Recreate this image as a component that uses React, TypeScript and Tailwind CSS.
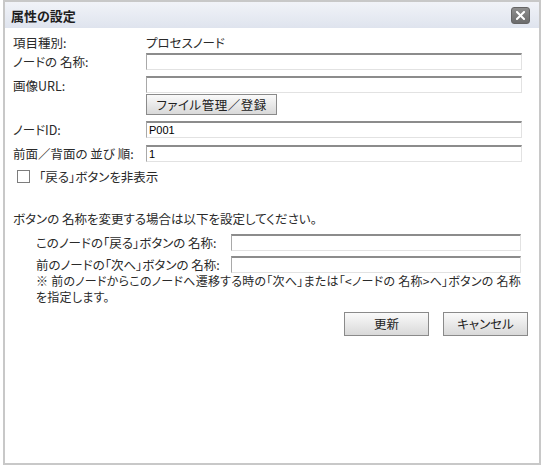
import React from "react";

const inputCls =
  "h-[17px] bg-white border-t-2 border-t-[#8c8c8c] border-l border-l-[#a9a9a9] border-r border-r-[#e2e2e2] border-b border-b-[#e2e2e2] px-[2px] text-[11px] leading-[14px] text-black outline-none [font-family:'Liberation_Sans',sans-serif]";

const btnCls =
  "flex items-center justify-center border border-[#8a8a8a] bg-gradient-to-b from-[#fafafa] to-[#d9d9d9] text-[12.5px] leading-[16px] text-[#222]";

export default function App() {
  return (
    <div className="w-[545px] h-[469px] bg-white pl-[3px] [font-family:'Noto_Sans_CJK_JP',sans-serif] [font-feature-settings:'palt'] text-[12.5px] leading-[16px] text-[#2a2a2a]">
      <div className="w-[538px] h-[465px] border-2 border-[#c8c8c8] flex flex-col">
        <div className="h-[26px] shrink-0 flex items-center justify-between pl-[6px] pr-[9px] bg-gradient-to-b from-[#f1f3f8] to-[#dfe4ee]">
          <span className="text-[13px] font-bold text-[#1e1e1e] leading-none">属性の設定</span>
          <div className="w-[19px] h-[17px] rounded-[3px] bg-gradient-to-b from-[#8f8f8f] to-[#6c6c6c] border border-[#656565] flex items-center justify-center">
            <svg width="9" height="9" viewBox="0 0 9 9">
              <path d="M1 1 L8 8 M8 1 L1 8" stroke="white" strokeWidth="2" strokeLinecap="square" />
            </svg>
          </div>
        </div>

        <div className="flex-1 flex flex-col pl-[8px] pr-[11px]">
          <div className="mt-[7px] h-[16px] flex items-center">
            <span className="w-[133px]">項目種別:</span>
            <span>プロセスノード</span>
          </div>

          <div className="mt-[2px] h-[17px] flex items-center mr-[6px]">
            <span className="w-[133px] shrink-0">ノードの 名称:</span>
            <input className={inputCls + " flex-1"} defaultValue="" />
          </div>

          <div className="mt-[6px] flex items-start mr-[6px]">
            <span className="w-[133px] shrink-0 pt-[2px]">画像URL:</span>
            <div className="flex-1 flex flex-col">
              <input className={inputCls + " w-full"} defaultValue="" />
              <button className={btnCls + " mt-[1px] w-[131px] h-[21px] tracking-[0.5px]"}>
                ファイル管理／登録
              </button>
            </div>
          </div>

          <div className="mt-[6px] h-[17px] flex items-center mr-[6px]">
            <span className="w-[133px] shrink-0">ノードID:</span>
            <input className={inputCls + " flex-1"} defaultValue="P001" />
          </div>

          <div className="mt-[7px] h-[17px] flex items-center mr-[6px]">
            <span className="w-[133px] shrink-0">前面／背面の 並び 順:</span>
            <input className={inputCls + " flex-1"} defaultValue="1" />
          </div>

          <div className="mt-[8px] h-[13px] flex items-center">
            <span className="ml-[4px] w-[13px] h-[13px] border border-[#7d7d7d] bg-white shrink-0" />
            <span className="ml-[9px]">「戻る」ボタンを非表示</span>
          </div>

          <div className="mt-[28px] h-[16px]">
            ボタンの 名称を変更する場合は以下を設定してください。
          </div>

          <div className="mt-[7px] h-[17px] flex items-center ml-[23px] mr-[7px]">
            <span className="w-[195px] shrink-0">このノードの「戻る」ボタンの 名称:</span>
            <input className={inputCls + " flex-1"} defaultValue="" />
          </div>

          <div className="mt-[5px] h-[17px] flex items-center ml-[23px] mr-[7px]">
            <span className="w-[195px] shrink-0">前のノードの「次へ」ボタンの 名称:</span>
            <input className={inputCls + " flex-1"} defaultValue="" />
          </div>

          <div className="ml-[23px] whitespace-nowrap text-[12px] tracking-[0.25px] leading-[16px]">
            ※ 前のノードからこのノードへ遷移する時の「次へ」または「&lt;ノードの 名称&gt;へ」ボタンの 名称
            <br />
            を指定します。
          </div>

          <div className="mt-[7px] flex justify-end gap-[14px]">
            <button className={btnCls + " w-[85px] h-[24px]"}>更新</button>
            <button className={btnCls + " w-[85px] h-[24px]"}>キャンセル</button>
          </div>
        </div>
      </div>
    </div>
  );
}
